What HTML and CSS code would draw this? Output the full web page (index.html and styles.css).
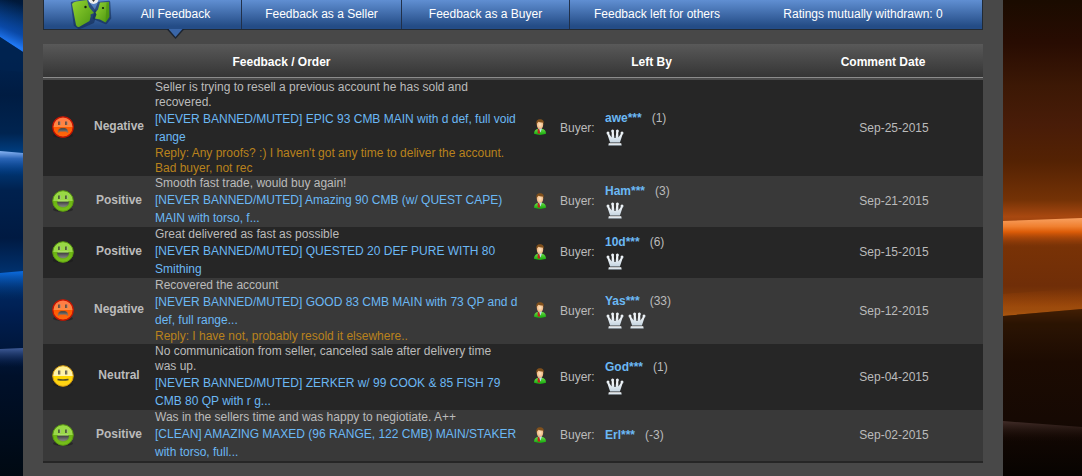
FILE: index.html
```
<!DOCTYPE html>
<html lang="en">
<head>
<meta charset="utf-8">
<title>Feedback</title>
<link rel="stylesheet" href="styles.css">
</head>
<body>
<svg class="defs" width="0" height="0" aria-hidden="true">
  <defs>
    <linearGradient id="gGreen" x2="0" y2="1"><stop offset="0" stop-color="#98d844"/><stop offset=".5" stop-color="#9ad848"/><stop offset=".52" stop-color="#6cb512"/><stop offset="1" stop-color="#78c01c"/></linearGradient>
    <linearGradient id="gRed" x2="0" y2="1"><stop offset="0" stop-color="#ff7848"/><stop offset=".5" stop-color="#ff8a40"/><stop offset=".52" stop-color="#ff5a00"/><stop offset="1" stop-color="#ff6a10"/></linearGradient>
    <linearGradient id="gYellow" x2="0" y2="1"><stop offset="0" stop-color="#fff08c"/><stop offset=".5" stop-color="#fff4b4"/><stop offset=".52" stop-color="#ffd800"/><stop offset="1" stop-color="#ffd21c"/></linearGradient>
    <linearGradient id="gMouth" x2="0" y2="1"><stop offset="0" stop-color="#3c3c3c"/><stop offset="1" stop-color="#8a8a8a"/></linearGradient>
    <linearGradient id="gCrown" x2="0" y2="1"><stop offset="0" stop-color="#ffffff"/><stop offset="1" stop-color="#c4d4e0"/></linearGradient>
    <linearGradient id="gLeaf" x2="1" y2="1"><stop offset="0" stop-color="#93d431"/><stop offset="1" stop-color="#4a9410"/></linearGradient>
    <radialGradient id="gFace"><stop offset="0" stop-color="#ffe6c0"/><stop offset="1" stop-color="#eeb480"/></radialGradient>
    <linearGradient id="gCoat" x2="0" y2="1"><stop offset="0" stop-color="#6ee048"/><stop offset="1" stop-color="#12a80c"/></linearGradient>
    <linearGradient id="gBlue" x2="0" y2="1">
      <stop offset="0" stop-color="#001838"/><stop offset=".06" stop-color="#002a60"/><stop offset=".1" stop-color="#002454"/><stop offset=".2" stop-color="#001c42"/><stop offset=".28" stop-color="#002450"/><stop offset=".33" stop-color="#00448c"/><stop offset=".4" stop-color="#00214e"/><stop offset=".5" stop-color="#001a42"/><stop offset=".57" stop-color="#00306c"/><stop offset=".66" stop-color="#001e50"/><stop offset=".73" stop-color="#00173c"/><stop offset=".79" stop-color="#00102a"/><stop offset="1" stop-color="#000912"/>
    </linearGradient>
    <linearGradient id="gOrange" x2="0" y2="1">
      <stop offset="0" stop-color="#1a0b00"/><stop offset=".09" stop-color="#280c02"/><stop offset=".18" stop-color="#3c1805"/><stop offset=".26" stop-color="#481c08"/><stop offset=".34" stop-color="#542203"/><stop offset=".42" stop-color="#743206"/><stop offset=".455" stop-color="#a84810"/><stop offset=".52" stop-color="#783206"/><stop offset=".6" stop-color="#702e08"/><stop offset=".645" stop-color="#853e08"/><stop offset=".68" stop-color="#2b1403"/><stop offset=".76" stop-color="#1c0b02"/><stop offset=".88" stop-color="#160903"/><stop offset="1" stop-color="#070301"/>
    </linearGradient>
    <linearGradient id="bHot" gradientUnits="userSpaceOnUse" x1="26" y1="6" x2="10" y2="43"><stop offset="0" stop-color="#0c50a8" stop-opacity="0"/><stop offset=".7" stop-color="#0c50b8" stop-opacity=".8"/><stop offset="1" stop-color="#2078f4"/></linearGradient>
    <linearGradient id="bPale" x2="0" y2="1"><stop offset="0" stop-color="#88b4f4"/><stop offset=".3" stop-color="#2c66b8"/><stop offset="1" stop-color="#003a88" stop-opacity="0"/></linearGradient>
    <linearGradient id="bMid" x2="0" y2="1"><stop offset="0" stop-color="#0c6ce0"/><stop offset="1" stop-color="#00306c" stop-opacity="0"/></linearGradient>
    <linearGradient id="bDim" x2="0" y2="1"><stop offset="0" stop-color="#405c98"/><stop offset="1" stop-color="#0a2458" stop-opacity="0"/></linearGradient>
    <linearGradient id="oHot" x2="0" y2="1"><stop offset="0" stop-color="#f8a060"/><stop offset=".3" stop-color="#f08030"/><stop offset=".5" stop-color="#dc5c08"/><stop offset="1" stop-color="#8c3808" stop-opacity="0"/></linearGradient>
    <linearGradient id="oLow" x2="0" y2="1"><stop offset="0" stop-color="#a04008" stop-opacity="0"/><stop offset="1" stop-color="#ac5810"/></linearGradient>
    <linearGradient id="oDim" x2="0" y2="1"><stop offset="0" stop-color="#402c28"/><stop offset="1" stop-color="#180a04" stop-opacity="0"/></linearGradient>

    <symbol id="negative" viewBox="0 0 22 22">
      <ellipse cx="11" cy="19.5" rx="10" ry="2.3" fill="#181818" opacity=".5"/>
      <circle cx="11" cy="11" r="10.2" fill="url(#gRed)" stroke="#c81400" stroke-width="1.2"/>
      <path d="M7 5.500v3.500M14 5.500v3.500" stroke="#444" stroke-width="1.600"/><path d="M8.300 5.500v3.500M15.300 5.500v3.500" stroke="#b88870" stroke-width="1"/>
      <path d="M6 16.800c0-4.600 2.500-4.800 5-4.800s5 .2 5 4.800l-2.200-1.300H8.200z" fill="url(#gMouth)" stroke="#a0683c" stroke-width=".4"/>
    </symbol>
    <symbol id="positive" viewBox="0 0 22 22">
      <ellipse cx="11" cy="19.500" rx="10" ry="2.300" fill="#181818" opacity=".5"/>
      <circle cx="11" cy="11" r="10.300" fill="url(#gGreen)" stroke="#5c9c10" stroke-width="1"/>
      <path d="M7 5.500v3.500M14 5.500v3.500" stroke="#3c4434" stroke-width="1.600"/><path d="M8.300 5.500v3.500M15.300 5.500v3.500" stroke="#a4c080" stroke-width="1"/>
      <path d="M5 11.500h12c0 3.600-2.200 5.700-6 5.700s-6-2.100-6-5.700z" fill="url(#gMouth)" stroke="#5c8a24" stroke-width=".4"/><path d="M5.500 11h11" stroke="#c8e8a0" stroke-width=".7"/>
    </symbol>
    <symbol id="neutral" viewBox="0 0 22 22">
      <ellipse cx="11" cy="19.500" rx="10" ry="2.300" fill="#181818" opacity=".5"/>
      <circle cx="11" cy="11" r="10.300" fill="url(#gYellow)" stroke="#d69c10" stroke-width="1"/>
      <path d="M7 5.500v4M14 5.500v4" stroke="#444" stroke-width="1.600"/><path d="M8.300 5.500v4M15.300 5.500v4" stroke="#c8b880" stroke-width="1"/>
      <path d="M5.500 14.600q5.500 1 11 0" fill="none" stroke="#55502c" stroke-width="1.500"/>
    </symbol>
    <symbol id="person" viewBox="0 0 14 16">
      <path d="M1 14.800C1 12 2.500 10 5.500 9.500h3c3 .5 4.500 2.500 4.500 5.300Q7 17 1 14.800z" fill="url(#gCoat)"/>
      <path d="M5 9.300h4l-1.500 4.200z" fill="#c4dcec"/>
      <path d="M4.700 10.300l1.500-.6 1 4.300-1.200 1-1.400-1z" fill="#c02420"/>
      <ellipse cx="7" cy="5.600" rx="3.200" ry="4.200" fill="url(#gFace)"/>
      <path d="M3.400 5.500C2.800 2 4.300.3 7 .3s4.400 1.600 3.800 5.200l-.8-2c-1.800.2-3.400 0-4.600-.7-.9.600-1.300 1.500-2 2.700z" fill="#80501c"/>
    </symbol>
    <symbol id="crown" viewBox="0 0 18 17">
      <g fill="url(#gCrown)"><circle cx="2" cy="4" r="1.500"/><circle cx="6.600" cy="2" r="1.500"/><circle cx="11.400" cy="2" r="1.500"/><circle cx="16" cy="4" r="1.500"/>
      <path d="M1.200 4.800L2.600 4l3 4.600L5.800 2.500h1.900L8.400 9h1.200l.7-6.500h1.900l.2 6.100 3-4.600 1.400.8-2.900 8.700H4.100z"/><path d="M2.800 14.300h12.400l.5 2.200H2.300z"/></g>
    </symbol>
  </defs>
</svg>
<div class="page">
  <svg class="side" viewBox="0 0 23 476" preserveAspectRatio="none" aria-hidden="true">
    <rect width="23" height="476" fill="url(#gBlue)"/>
    <path d="M0 0H23V52L0 37z" fill="url(#bHot)"/>
    <path d="M0 37L23 52V72L0 70z" fill="#002350" opacity=".7"/>
    <path d="M0 151L23 153V176H0z" fill="url(#bPale)"/>
    <path d="M0 273L23 271V300H0z" fill="url(#bMid)"/>
    <path d="M0 349L23 348V367H0z" fill="url(#bDim)"/>
  </svg>
  <main class="content">
    <nav class="tabs">
      <span class="logo"><svg viewBox="0 0 44 30" width="44" height="30" aria-hidden="true">
        <path d="M3 3l14-3 10 13-3 9-14 6-4-3z" fill="#142c54" opacity=".6" stroke="#142c54" stroke-width="2.500" stroke-linejoin="round"/>
        <path d="M30 3l10-1 1 16-4 5-12-5 2-8z" fill="#142c54" opacity=".6" stroke="#142c54" stroke-width="2.500" stroke-linejoin="round"/>
        <path d="M3 4q1-2 4-2.500L18 0l2 7 5 6-3.500 1.500.2 2-1.200 4.500L10 27q-2 .5-3-2z" fill="url(#gLeaf)"/>
        <path d="M31 2.500L40 2l.3 15-3.800 5.500-5.500-3-5-1 1.500-4-1-2 2.500-3z" fill="url(#gLeaf)"/>
        <path d="M37.500 2.500L40 2l.3 15-3.800 5.500z" fill="#3f8a0c" opacity=".5"/>
        <circle cx="24.500" cy="-1" r="5" fill="#eee"/><path d="M23 0h3l-1.500 2z" fill="#333"/>
        <circle cx="16.500" cy="7" r="1.200" fill="#12240c"/><circle cx="34" cy="8" r="1.100" fill="#12240c"/>
      </svg></span>
      <a class="tab tab-all active" href="#">All Feedback</a>
      <a class="tab tab-seller" href="#">Feedback as a Seller</a>
      <a class="tab tab-buyer" href="#">Feedback as a Buyer</a>
      <a class="tab tab-left" href="#">Feedback left for others</a>
      <span class="tab tab-ratings">Ratings mutually withdrawn: 0</span>
    </nav>
    <table class="feedback">
      <colgroup><col class="c-face"><col class="c-kind"><col class="c-text"><col class="c-person"><col class="c-role"><col class="c-name"><col class="c-date"></colgroup>
      <thead><tr><th colspan="3">Feedback / Order</th><th colspan="3">Left By</th><th>Comment Date</th></tr></thead>
      <tbody>
        <tr>
          <td><svg class="face"><use href="#negative"/></svg></td><td class="kind">Negative</td>
          <td><p class="comment">Seller is trying to resell a previous account he has sold and recovered.</p><p class="order"><a href="#">[NEVER BANNED/MUTED] EPIC 93 CMB MAIN with d def, full void range</a></p><p class="reply">Reply: Any proofs? :) I haven't got any time to deliver the account. Bad buyer, not rec</p></td>
          <td><svg class="person"><use href="#person"/></svg></td><td>Buyer:</td>
          <td><div class="who"><a href="#">awe***</a><span>(1)</span></div><div class="crowns"><svg><use href="#crown"/></svg></div></td>
          <td class="date">Sep-25-2015</td>
        </tr>
        <tr>
          <td><svg class="face"><use href="#positive"/></svg></td><td class="kind">Positive</td>
          <td><p class="comment">Smooth fast trade, would buy again!</p><p class="order"><a href="#">[NEVER BANNED/MUTED] Amazing 90 CMB (w/ QUEST CAPE) MAIN with torso, f...</a></p></td>
          <td><svg class="person"><use href="#person"/></svg></td><td>Buyer:</td>
          <td><div class="who"><a href="#">Ham***</a><span>(3)</span></div><div class="crowns"><svg><use href="#crown"/></svg></div></td>
          <td class="date">Sep-21-2015</td>
        </tr>
        <tr>
          <td><svg class="face"><use href="#positive"/></svg></td><td class="kind">Positive</td>
          <td><p class="comment">Great delivered as fast as possible</p><p class="order"><a href="#">[NEVER BANNED/MUTED] QUESTED 20 DEF PURE WITH 80 Smithing</a></p></td>
          <td><svg class="person"><use href="#person"/></svg></td><td>Buyer:</td>
          <td><div class="who"><a href="#">10d***</a><span>(6)</span></div><div class="crowns"><svg><use href="#crown"/></svg></div></td>
          <td class="date">Sep-15-2015</td>
        </tr>
        <tr>
          <td><svg class="face"><use href="#negative"/></svg></td><td class="kind">Negative</td>
          <td><p class="comment">Recovered the account</p><p class="order"><a href="#">[NEVER BANNED/MUTED] GOOD 83 CMB MAIN with 73 QP and d def, full range...</a></p><p class="reply">Reply: I have not, probably resold it elsewhere..</p></td>
          <td><svg class="person"><use href="#person"/></svg></td><td>Buyer:</td>
          <td><div class="who"><a href="#">Yas***</a><span>(33)</span></div><div class="crowns"><svg><use href="#crown"/></svg><svg><use href="#crown"/></svg></div></td>
          <td class="date">Sep-12-2015</td>
        </tr>
        <tr>
          <td><svg class="face"><use href="#neutral"/></svg></td><td class="kind">Neutral</td>
          <td><p class="comment">No communication from seller, canceled sale after delivery time was up.</p><p class="order"><a href="#">[NEVER BANNED/MUTED] ZERKER w/ 99 COOK &amp; 85 FISH 79 CMB 80 QP with r g...</a></p></td>
          <td><svg class="person"><use href="#person"/></svg></td><td>Buyer:</td>
          <td><div class="who"><a href="#">God***</a><span>(1)</span></div><div class="crowns"><svg><use href="#crown"/></svg></div></td>
          <td class="date">Sep-04-2015</td>
        </tr>
        <tr>
          <td><svg class="face"><use href="#positive"/></svg></td><td class="kind">Positive</td>
          <td><p class="comment">Was in the sellers time and was happy to negiotiate. A++</p><p class="order"><a href="#">[CLEAN] AMAZING MAXED (96 RANGE, 122 CMB) MAIN/STAKER with torso, full...</a></p></td>
          <td><svg class="person"><use href="#person"/></svg></td><td>Buyer:</td>
          <td><div class="who"><a href="#">Erl***</a><span>(-3)</span></div></td>
          <td class="date">Sep-02-2015</td>
        </tr>
      </tbody>
    </table>
  </main>
  <svg class="side" viewBox="0 0 79 476" preserveAspectRatio="none" aria-hidden="true">
    <rect width="79" height="476" fill="url(#gOrange)"/>
    <path d="M0 221L79 218V244L0 246z" fill="url(#oHot)"/>
    <path d="M0 294L79 288V309L0 316z" fill="url(#oLow)"/>
    <path d="M0 316L79 309V328H0z" fill="#2b1403" opacity=".7"/>
    <path d="M0 421L79 427V442H0z" fill="url(#oDim)"/>
  </svg>
</div>
</body>
</html>
```
FILE: styles.css
```
body {
  margin: 0;
  background: #484848;
  color: #bbb;
  font: 12px/15px "Liberation Sans", Arial, sans-serif;
}

a {
  color: #6bb8f4;
  text-decoration: none;
}

p {
  margin: 0;
}

.defs {
  position: absolute;
}

.page {
  display: grid;
  grid-template-columns: 23px minmax(0, 1fr) 79px;
  min-height: 100vh;
}

.side {
  display: block;
  width: 100%;
  height: 100%;
}

.content {
  padding: 0 20px;
}

.tabs {
  display: flex;
  box-sizing: border-box;
  height: 30px;
  margin-bottom: 14px;
  border: solid #222a34;
  border-width: 0 1px 1px;
  background: linear-gradient(#608fd2, #244c86 90%);
}

.logo {
  flex: 0 0 66px;
  min-width: 0;
}

.logo svg {
  display: block;
  margin-left: 25px;
}

.tab {
  position: relative;
  box-sizing: border-box;
  border-right: 1px solid #20304a;
  color: #fff;
  line-height: 28px;
  text-align: center;
}

.tab-all { flex: 0 0 132px; }
.tab-seller { flex: 0 0 160px; }
.tab-buyer { flex: 0 0 168px; }
.tab-left { flex: 174 1 0; border-right: 0; }
.tab-ratings { flex: 238 1 0; border-right: 0; }

.active::before,
.active::after {
  content: "";
  position: absolute;
  top: 29px;
  left: 50%;
  margin-left: -9px;
  width: 18px;
  height: 10px;
  background: #1c2430;
  clip-path: polygon(0 0, 100% 0, 50% 100%);
}

.active::after {
  margin-left: -7px;
  width: 14px;
  height: 8px;
  background: #3a66a8;
}

.feedback {
  width: 100%;
  table-layout: fixed;
  border-collapse: separate;
  border-spacing: 0;
  border-bottom: 2px solid #262626;
}

.c-face { width: 40px; }
.c-kind { width: 72px; }
.c-person { width: 40px; }
.c-role { width: 45px; }
.c-name { width: 178px; }
.c-date { width: 200px; }

.feedback th {
  height: 31px;
  padding: 3px 0 0;
  border-bottom: 2px solid #4c4c4c;
  background: linear-gradient(#595959, #343434);
  box-shadow: inset 0 -1px #8c8c8c;
  color: #fff;
}

.feedback td {
  padding: 0;
  vertical-align: middle;
}

.feedback tbody tr { background: #262626; }
.feedback tbody tr:nth-child(even) { background: #393939; }

.feedback .kind {
  padding-bottom: 3px;
  font-weight: bold;
  text-align: center;
}

.feedback .date {
  padding-left: 22px;
  text-align: center;
}

.comment { padding-right: 6px; }

.order {
  margin-right: -4px;
  line-height: 18px;
}

.reply { color: #b9821c; }

.face {
  display: block;
  width: 22px;
  height: 22px;
  margin: 0 0 2px 9px;
}

.person {
  display: block;
  width: 14px;
  height: 16px;
  margin: 0 0 2px 13px;
}

.who {
  display: flex;
  gap: 10px;
}

.who a { font-weight: bold; }

.crowns {
  display: flex;
  gap: 4px;
  padding: 3px 1px 0;
}

.crowns svg {
  width: 18px;
  height: 17px;
}
```
